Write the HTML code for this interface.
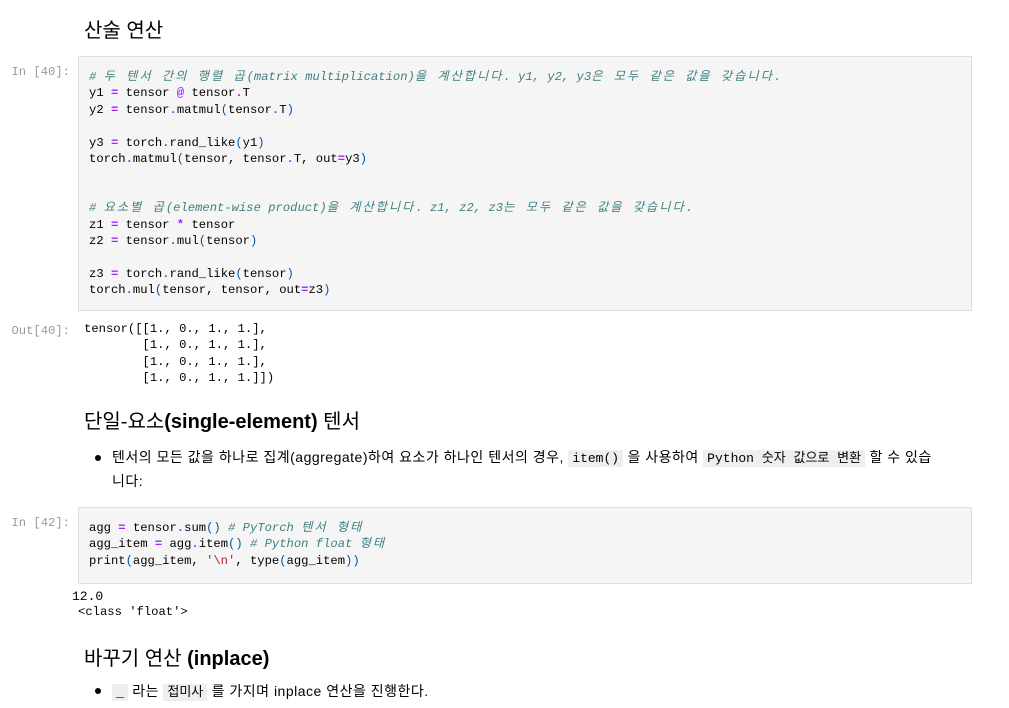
<!DOCTYPE html><html><head><meta charset="utf-8"><style>
body{margin:0;background:#fff;width:1009px;height:708px;overflow:hidden;position:relative;font-family:"Liberation Sans","Noto Sans CJK KR",sans-serif;color:#000}
.a{position:absolute}
.mono{font-family:"Liberation Mono","Noto Sans CJK KR",monospace;font-size:12.2px;line-height:16.4px;white-space:pre}
.pr{color:#999;right:939px;text-align:right}
.box{background:#f5f5f5;border:1px solid #e0e0e0;left:78px;width:892px}
.c{color:#408080;font-style:italic}.o{color:#aa22ff;font-weight:bold}.p{color:#0055aa}.s{color:#ba2121}
.cd{background:#eee;font-family:"Liberation Mono","Noto Sans CJK KR",monospace;font-size:13px;padding:1px 4px;letter-spacing:0}
.bt{font-size:14px;line-height:22px;letter-spacing:.5px;white-space:nowrap}
.dot{width:6px;height:6px;border-radius:3px;background:#000}
.k{letter-spacing:2px}
</style></head><body>
<div class="a" style="left:84px;top:14px;font-size:20px">산술 연산</div>
<div class="a mono pr" style="top:64px">In [40]:</div>
<div class="a box" style="top:56px;height:253px"></div>
<div class="a mono" style="left:89px;top:69px"><span class="c"># <span class="k">두 텐서 간의 행렬 곱</span>(matrix multiplication)<span class="k">을 계산합니다</span>. y1, y2, y3<span class="k">은 모두 같은 값을 갖습니다</span>.</span>
y1 <span class="o">=</span> tensor <span class="o">@</span> tensor<span class="o">.</span>T
y2 <span class="o">=</span> tensor<span class="o">.</span>matmul<span class="p">(</span>tensor<span class="o">.</span>T<span class="p">)</span>

y3 <span class="o">=</span> torch<span class="o">.</span>rand_like<span class="p">(</span>y1<span class="p">)</span>
torch<span class="o">.</span>matmul<span class="p">(</span>tensor, tensor<span class="o">.</span>T, out<span class="o">=</span>y3<span class="p">)</span>


<span class="c"># <span class="k">요소별 곱</span>(element-wise product)<span class="k">을 계산합니다</span>. z1, z2, z3<span class="k">는 모두 같은 값을 갖습니다</span>.</span>
z1 <span class="o">=</span> tensor <span class="o">*</span> tensor
z2 <span class="o">=</span> tensor<span class="o">.</span>mul<span class="p">(</span>tensor<span class="p">)</span>

z3 <span class="o">=</span> torch<span class="o">.</span>rand_like<span class="p">(</span>tensor<span class="p">)</span>
torch<span class="o">.</span>mul<span class="p">(</span>tensor, tensor, out<span class="o">=</span>z3<span class="p">)</span></div>
<div class="a mono pr" style="top:323px">Out[40]:</div>
<div class="a mono" style="left:84px;top:321px">tensor([[1., 0., 1., 1.],
        [1., 0., 1., 1.],
        [1., 0., 1., 1.],
        [1., 0., 1., 1.]])</div>
<div class="a" style="left:84px;top:405px;font-size:20px">단일-요소<b>(single-element)</b> 텐서</div>
<div class="a dot" style="left:95px;top:455px"></div>
<div class="a bt" style="left:112px;top:446px">텐서의 모든 값을 하나로 집계(aggregate)하여 요소가 하나인 텐서의 경우, <span class="cd">item()</span> 을 사용하여 <span class="cd">Python 숫자 값으로 변환</span> 할 수 있습<br>니다:</div>
<div class="a mono pr" style="top:515px">In [42]:</div>
<div class="a box" style="top:507px;height:75px"></div>
<div class="a mono" style="left:89px;top:520px">agg <span class="o">=</span> tensor<span class="o">.</span>sum<span class="p">()</span> <span class="c"># PyTorch <span class="k">텐서 형태</span></span>
agg_item <span class="o">=</span> agg<span class="o">.</span>item<span class="p">()</span> <span class="c"># Python float <span class="k">형태</span></span>
print<span class="p">(</span>agg_item, <span class="s">'\n'</span>, type<span class="p">(</span>agg_item<span class="p">))</span></div>
<div class="a mono" style="left:72px;top:589px;font-size:13px">12.0</div>
<div class="a mono" style="left:78px;top:604px">&lt;class 'float'&gt;</div>
<div class="a" style="left:84px;top:642px;font-size:20px">바꾸기 연산 <b>(inplace)</b></div>
<div class="a dot" style="left:95px;top:688px"></div>
<div class="a bt" style="left:112px;top:680px"><span class="cd">_</span> 라는 <span class="cd">접미사</span> 를 가지며 inplace 연산을 진행한다.</div>
</body></html>
